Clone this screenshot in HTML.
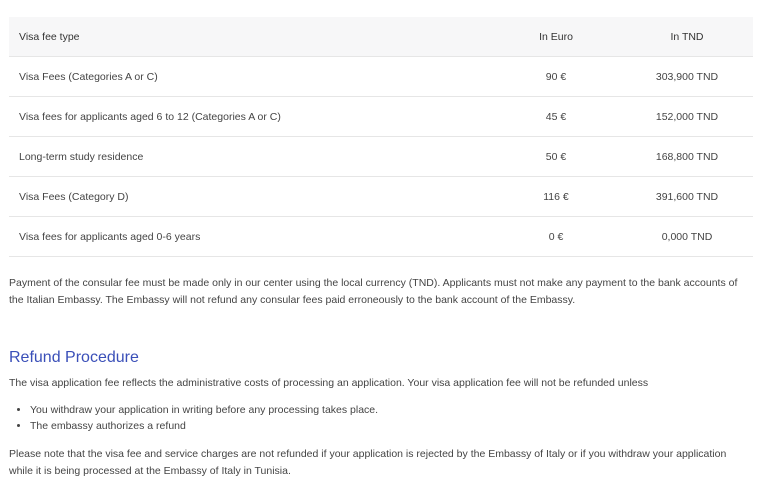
<!DOCTYPE html>
<html><head><style>
body{margin:0;background:#fff;font-family:"Liberation Sans",sans-serif;color:#444;font-size:10.5px;}
table{position:absolute;left:9px;top:17px;width:744px;border-collapse:collapse;}
td{height:39px;padding:0 0 0 10px;border-bottom:1px solid #e6e6e6;vertical-align:middle;}
tr:first-child td{background:#f7f7f8;color:#333;}
td.c{text-align:center;padding:0;}
.p{position:absolute;left:9px;width:744px;line-height:17px;margin:0;}
h2{position:absolute;left:9px;top:349px;margin:0;font-weight:normal;font-size:16px;color:#3a4fb8;}
ul{position:absolute;left:0;top:402px;margin:0;padding-left:30px;line-height:16px;}
</style></head><body>
<table>
<tr><td>Visa fee type</td><td class="c" style="width:130px">In Euro</td><td class="c" style="width:132px">In TND</td></tr>
<tr><td>Visa Fees (Categories A or C)</td><td class="c">90 €</td><td class="c">303,900 TND</td></tr>
<tr><td>Visa fees for applicants aged 6 to 12 (Categories A or C)</td><td class="c">45 €</td><td class="c">152,000 TND</td></tr>
<tr><td>Long-term study residence</td><td class="c">50 €</td><td class="c">168,800 TND</td></tr>
<tr><td>Visa Fees (Category D)</td><td class="c">116 €</td><td class="c">391,600 TND</td></tr>
<tr><td>Visa fees for applicants aged 0-6 years</td><td class="c">0 €</td><td class="c">0,000 TND</td></tr>
</table>
<p class="p" style="top:275px">Payment of the consular fee must be made only in our center using the local currency (TND). Applicants must not make any payment to the bank accounts of the Italian Embassy. The Embassy will not refund any consular fees paid erroneously to the bank account of the Embassy.</p>
<h2>Refund Procedure</h2>
<p class="p" style="top:375px">The visa application fee reflects the administrative costs of processing an application. Your visa application fee will not be refunded unless</p>
<ul><li>You withdraw your application in writing before any processing takes place.</li><li>The embassy authorizes a refund</li></ul>
<p class="p" style="top:446px">Please note that the visa fee and service charges are not refunded if your application is rejected by the Embassy of Italy or if you withdraw your application while it is being processed at the Embassy of Italy in Tunisia.</p>
</body></html>
